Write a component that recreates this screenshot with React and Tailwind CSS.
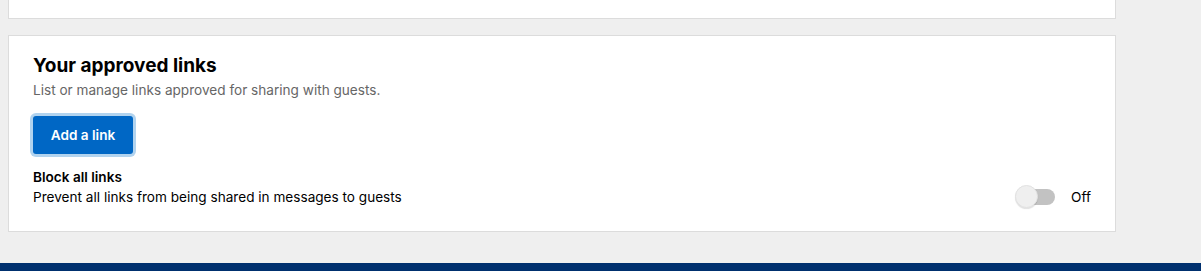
import { useState } from 'react';

function Toggle({ on, onChange }) {
  return (
    <button
      onClick={() => onChange(!on)}
      className="relative flex items-center w-[40px] h-[20px]"
      aria-pressed={on}
    >
      <span className={`absolute left-[3px] right-0 h-[16px] rounded-full ${on ? 'bg-[#0067c5]' : 'bg-[#c2c2c2]'}`} />
      <span
        className={`absolute top-[-2px] w-[23px] h-[23px] rounded-full bg-[#efefef] border border-[#e2e2e2] shadow-[0_1px_1px_rgba(0,0,0,0.12)] ${on ? 'left-[17px]' : 'left-0'}`}
      />
    </button>
  );
}

export default function App() {
  const [blocked, setBlocked] = useState(false);

  return (
    <div className="min-h-[271px] bg-[#efefef] flex flex-col font-['Inter',sans-serif] text-black">
      <div className="pl-2 pr-[85px]">
        <div className="h-[19px] bg-white border-x border-b border-[#dcdcdc]" />

        <div className="mt-4 bg-white border border-[#dcdcdc] px-6 pt-[18px] pb-6 text-[13.6px]">
          <h3 className="text-[19px] leading-[24px] font-bold">Your approved links</h3>
          <p className="mt-[2px] leading-5 text-[#666666]">List or manage links approved for sharing with guests.</p>

          <button className="mt-4 h-[38px] w-[100px] rounded-[3px] bg-[#0067c5] text-white font-semibold ring-[3px] ring-[#b1d3ef]">
            Add a link
          </button>

          <div className="mt-[13px]">
            <div className="leading-5 font-semibold">Block all links</div>
            <div className="flex items-center justify-between">
              <span className="leading-5">Prevent all links from being shared in messages to guests</span>
              <div className="flex items-center gap-4">
                <Toggle on={blocked} onChange={setBlocked} />
                <span className="leading-5">{blocked ? 'On' : 'Off'}</span>
              </div>
            </div>
          </div>
        </div>
      </div>

      <div className="mt-[31px] h-[8px] bg-[#00306e]" />
    </div>
  );
}
